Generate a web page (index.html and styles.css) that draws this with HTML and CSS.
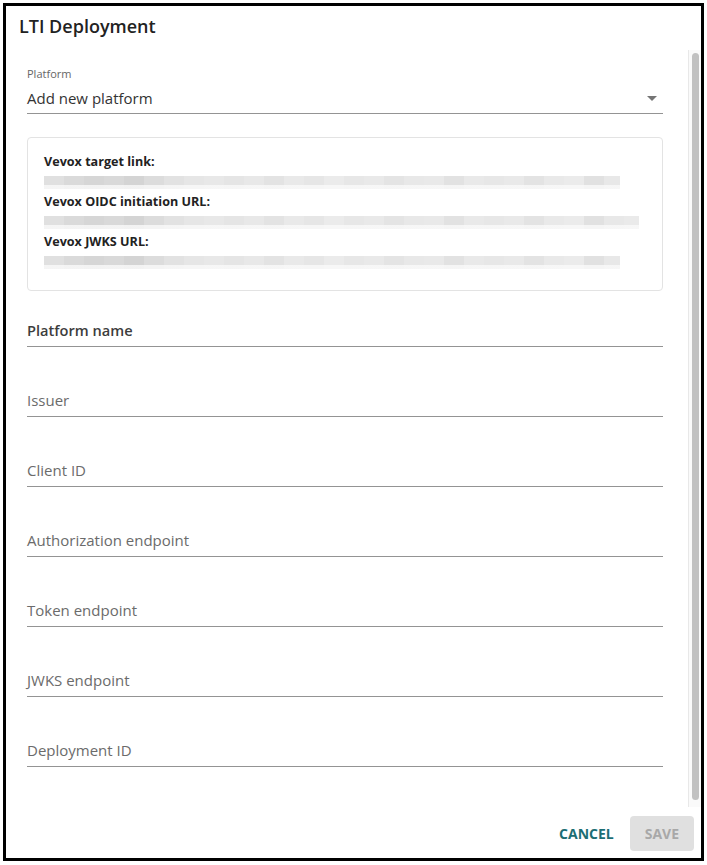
FILE: index.html
```html
<!DOCTYPE html>
<html lang="en">
<head>
<meta charset="utf-8">
<title>LTI Deployment</title>
<link rel="stylesheet" href="styles.css">
</head>
<body>
<div class="page">
  <div class="dialog">
    <div class="dialog-header">
      <h2 class="dialog-title">LTI Deployment</h2>
    </div>
    <div class="dialog-body">
      <div class="body-content">
        <div class="select-field">
          <div class="select-label">Platform</div>
          <div class="select-row">
            <span class="select-value">Add new platform</span>
            <svg class="select-icon" viewBox="0 0 24 24" width="24" height="24" aria-hidden="true"><path d="M7 10l5 5 5-5z"/></svg>
          </div>
        </div>

        <div class="info-box">
          <div class="info-row">
            <div class="info-label">Vevox target link:</div>
            <div class="blur-bar bar-short"></div>
          </div>
          <div class="info-row">
            <div class="info-label">Vevox OIDC initiation URL:</div>
            <div class="blur-bar bar-long"></div>
          </div>
          <div class="info-row">
            <div class="info-label">Vevox JWKS URL:</div>
            <div class="blur-bar bar-short"></div>
          </div>
        </div>

        <div class="field field-first"><span class="field-label field-label-strong">Platform name</span></div>
        <div class="field"><span class="field-label">Issuer</span></div>
        <div class="field"><span class="field-label">Client ID</span></div>
        <div class="field"><span class="field-label">Authorization endpoint</span></div>
        <div class="field"><span class="field-label">Token endpoint</span></div>
        <div class="field"><span class="field-label">JWKS endpoint</span></div>
        <div class="field"><span class="field-label">Deployment ID</span></div>
      </div>
      <div class="scrollbar" aria-hidden="true">
        <div class="scrollbar-thumb"></div>
      </div>
    </div>
    <div class="dialog-actions">
      <button class="btn btn-text" type="button">Cancel</button>
      <button class="btn btn-disabled" type="button" disabled>Save</button>
    </div>
  </div>
</div>
</body>
</html>
```
FILE: styles.css
```css
* { box-sizing: border-box; }

html, body {
  margin: 0;
  padding: 0;
  background: #ffffff;
}

body {
  font-family: "Open Sans", "Liberation Sans", sans-serif;
  color: #212121;
}

.page {
  padding: 3px;
}

.dialog {
  height: 858px;
  border: 3px solid #000;
  background: #fff;
  display: flex;
  flex-direction: column;
}

.dialog-header {
  padding: 8px 13px 12px;
  flex: none;
}

.dialog-title {
  margin: 0;
  font-size: 18px;
  line-height: 24px;
  font-weight: 600;
  color: #222;
}

.dialog-body {
  flex: 1;
  min-height: 0;
  display: flex;
  overflow: hidden;
}

.body-content {
  flex: 1;
  min-width: 0;
  padding: 17px 25px 44px 21px;
}

.scrollbar {
  flex: none;
  width: 13px;
  background: #fafafa;
  border-left: 1px solid #e8e8e8;
  padding: 3px 2px 7px 3px;
  display: flex;
}

.scrollbar-thumb {
  flex: 1;
  background: #c1c1c1;
  border-radius: 4px;
}

/* select */
.select-label {
  font-size: 11px;
  line-height: 14px;
  color: #666;
  margin-bottom: 7px;
}

.select-row {
  display: flex;
  align-items: center;
  height: 26px;
  padding-bottom: 5px;
  border-bottom: 1px solid #949494;
}

.select-value {
  flex: 1;
  font-size: 15px;
  line-height: 20px;
  color: #333;
}

.select-icon {
  flex: none;
  fill: rgba(0, 0, 0, 0.54);
  margin: -2px -1px -2px 0;
}

/* info box */
.info-box {
  margin-top: 23px;
  border: 1px solid #e3e3e3;
  border-radius: 4px;
  padding: 15px 16px 21px;
  display: flex;
  flex-direction: column;
  gap: 4px;
}

.info-label {
  font-size: 12.6px;
  line-height: 18px;
  font-weight: 700;
  color: #222;
}

.blur-bar {
  margin-top: 5px;
  height: 13px;
  background-image:
    linear-gradient(to bottom, rgba(255,255,255,0) 0 9px, rgba(250,250,250,0.8) 9px 100%),
    linear-gradient(to right,
      #e0e0e0 0 20px, #dadada 20px 40px, #d6d6d6 40px 60px, #d9d9d9 60px 80px,
      #d4d4d4 80px 100px, #dcdcdc 100px 120px, #e2e2e2 120px 140px, #e6e6e6 140px 160px,
      #e8e8e8 160px 180px, #e5e5e5 180px 200px, #e8e8e8 200px 220px, #e3e3e3 220px 240px,
      #e9e9e9 240px 260px, #e6e6e6 260px 280px, #ebebeb 280px 300px, #e7e7e7 300px 320px,
      #e9e9e9 320px 340px, #e4e4e4 340px 360px, #e8e8e8 360px 380px, #e9e9e9 380px 400px,
      #e2e2e2 400px 420px, #e9e9e9 420px 440px, #e7e7e7 440px 460px, #e9e9e9 460px 480px,
      #e3e3e3 480px 500px, #e9e9e9 500px 520px, #ebebeb 520px 540px, #e1e1e1 540px 560px,
      #e8e8e8 560px 580px, #eaeaea 580px 600px);
}

.bar-short { width: 576px; }
.bar-long { width: 595px; }

/* text fields */
.field {
  margin-top: 44px;
  height: 26px;
  padding-bottom: 6px;
  border-bottom: 1px solid #949494;
}

.field-first {
  margin-top: 30px;
}

.field-label {
  display: block;
  font-size: 15px;
  line-height: 19px;
  color: #6b6b6b;
}

.field-label-strong {
  font-size: 14.6px;
  color: #3d3d3d;
  font-weight: 600;
}

/* actions */
.dialog-actions {
  flex: none;
  display: flex;
  justify-content: flex-end;
  align-items: center;
  gap: 8px;
  padding: 9px 7px 7px;
}

.btn {
  font-family: "Open Sans", "Liberation Sans", sans-serif;
  font-size: 14px;
  font-weight: 700;
  text-transform: uppercase;
  height: 35px;
  border: none;
  border-radius: 4px;
  background: transparent;
  cursor: pointer;
}

.btn-text {
  padding: 0 8px;
  color: #1c6e74;
}

.btn-disabled {
  min-width: 64px;
  padding: 0 15px;
  background: #e0e0e0;
  color: #a8a8a8;
  cursor: default;
}
```
